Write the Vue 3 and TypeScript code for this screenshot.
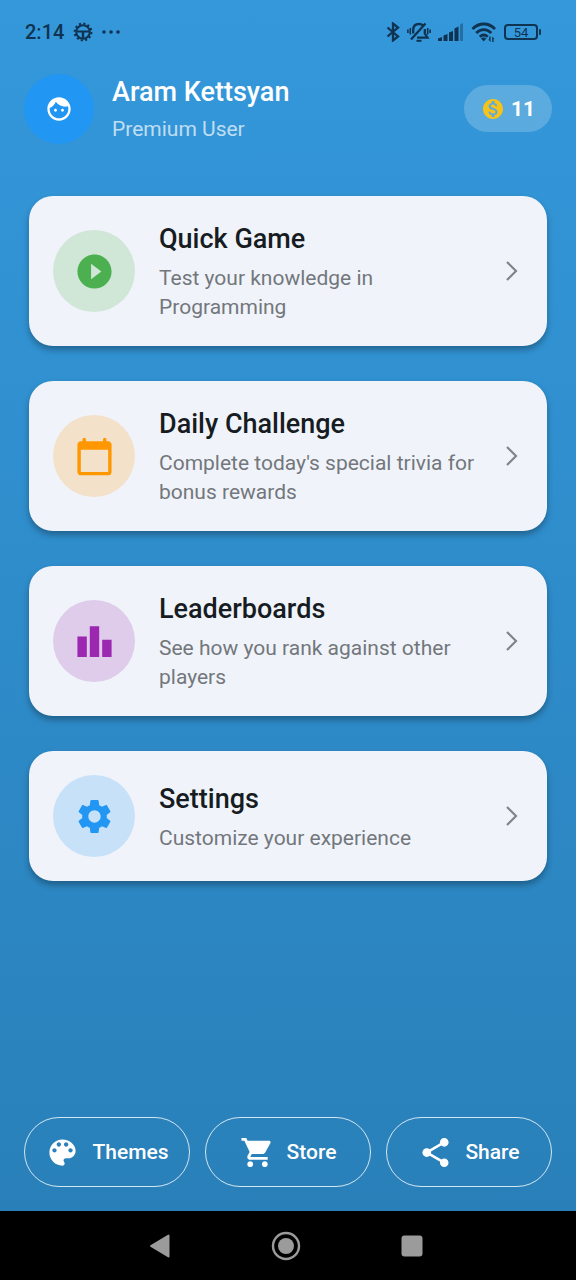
<script setup lang="ts">
interface MenuItem {
  title: string
  text: string
  tone: string
  path: string
}

interface Action {
  label: string
  path: string
}

const menu: MenuItem[] = [
  {
    title: 'Quick Game',
    text: 'Test your knowledge in Programming',
    tone: 'green',
    path: 'M12 2C6.48 2 2 6.48 2 12s4.48 10 10 10 10-4.48 10-10S17.52 2 12 2zm-2 14.5v-9l6 4.5-6 4.5z',
  },
  {
    title: 'Daily Challenge',
    text: "Complete today's special trivia for bonus rewards",
    tone: 'orange',
    path: 'M20 3h-1V2c0-.55-.45-1-1-1s-1 .45-1 1v1H7V2c0-.55-.45-1-1-1s-1 .45-1 1v1H4c-1.1 0-2 .9-2 2v16c0 1.1.9 2 2 2h16c1.1 0 2-.9 2-2V5c0-1.1-.9-2-2-2zm0 18H4V8h16v13z',
  },
  {
    title: 'Leaderboards',
    text: 'See how you rank against other players',
    tone: 'purple',
    path: 'M7.5 21H2V9h5.5v12zm7.25-18h-5.5v18h5.5V3zM22 11h-5.5v10H22V11z',
  },
  {
    title: 'Settings',
    text: 'Customize your experience',
    tone: 'blue',
    path: 'M19.14 12.94c.04-.3.06-.61.06-.94 0-.32-.02-.64-.07-.94l2.03-1.58c.18-.14.23-.41.12-.61l-1.92-3.32c-.12-.22-.37-.29-.59-.22l-2.39.96c-.5-.38-1.03-.7-1.62-.94L14.4 2.81c-.04-.24-.24-.41-.48-.41h-3.84c-.24 0-.43.17-.47.41L9.25 5.35C8.66 5.59 8.12 5.92 7.63 6.29L5.24 5.33c-.22-.08-.47 0-.59.22L2.74 8.87c-.12.21-.08.47.12.61l2.03 1.58c-.05.3-.09.63-.09.94s.02.64.07.94l-2.03 1.58c-.18.14-.23.41-.12.61l1.92 3.32c.12.22.37.29.59.22l2.39-.96c.5.38 1.03.7 1.62.94l.36 2.54c.05.24.24.41.48.41h3.84c.24 0 .44-.17.47-.41l.36-2.54c.59-.24 1.13-.56 1.62-.94l2.39.96c.22.08.47 0 .59-.22l1.92-3.32c.12-.22.07-.47-.12-.61l-2.01-1.58zM12 15.6c-1.98 0-3.6-1.62-3.6-3.6s1.62-3.6 3.6-3.6 3.6 1.62 3.6 3.6-1.62 3.6-3.6 3.6z',
  },
]

const actions: Action[] = [
  {
    label: 'Themes',
    path: 'M12 3c-4.97 0-9 4.03-9 9s4.03 9 9 9c.83 0 1.5-.67 1.5-1.5 0-.39-.15-.74-.39-1.01-.23-.26-.38-.61-.38-.99 0-.83.67-1.5 1.5-1.5H16c2.76 0 5-2.24 5-5 0-4.42-4.03-8-9-8zm-5.5 9c-.83 0-1.5-.67-1.5-1.5S5.67 9 6.5 9 8 9.67 8 10.5 7.33 12 6.5 12zm3-4C8.67 8 8 7.33 8 6.5S8.67 5 9.5 5s1.5.67 1.5 1.5S10.33 8 9.5 8zm5 0c-.83 0-1.5-.67-1.5-1.5S13.67 5 14.5 5s1.5.67 1.5 1.5S15.33 8 14.5 8zm3 4c-.83 0-1.5-.67-1.5-1.5S16.67 9 17.5 9s1.5.67 1.5 1.5-.67 1.5-1.5 1.5z',
  },
  {
    label: 'Store',
    path: 'M7 18c-1.1 0-1.99.9-1.99 2S5.9 22 7 22s2-.9 2-2-.9-2-2-2zM1 2v2h2l3.6 7.59-1.35 2.45c-.16.28-.25.61-.25.96 0 1.1.9 2 2 2h12v-2H7.42c-.14 0-.25-.11-.25-.25l.03-.12.9-1.63h7.45c.75 0 1.41-.41 1.75-1.03l3.58-6.49c.08-.14.12-.31.12-.48 0-.55-.45-1-1-1H5.21l-.94-2H1zm16 16c-1.1 0-1.99.9-1.99 2s.89 2 1.99 2 2-.9 2-2-.9-2-2-2z',
  },
  {
    label: 'Share',
    path: 'M18 16.08c-.76 0-1.44.3-1.96.77L8.91 12.7c.05-.23.09-.46.09-.7s-.04-.47-.09-.7l7.05-4.11c.54.5 1.25.81 2.04.81 1.66 0 3-1.34 3-3s-1.34-3-3-3-3 1.34-3 3c0 .24.04.47.09.7L8.04 9.81C7.5 9.31 6.79 9 6 9c-1.66 0-3 1.34-3 3s1.34 3 3 3c.79 0 1.5-.31 2.04-.81l7.12 4.16c-.05.21-.08.43-.08.65 0 1.61 1.31 2.92 2.92 2.92s2.92-1.31 2.92-2.92-1.31-2.92-2.92-2.92z',
  },
]
</script>

<template>
  <div class="screen">
    <div class="app">
      <div class="status">
        <div class="status-left">
          <span class="clock">2:14</span>
          <svg class="gear" viewBox="0 0 20 20" aria-hidden="true">
            <circle cx="10" cy="10" r="6.8" fill="none" stroke="currentColor" stroke-width="2" />
            <circle cx="10" cy="10" r="8.4" fill="none" stroke="currentColor" stroke-width="2" stroke-dasharray="2.2 2.198" />
            <path d="M4 8.4h12v2.2h-4.8V16H8.8v-5.400H4z" fill="currentColor" />
          </svg>
          <svg class="dots" viewBox="0 0 18 4" aria-hidden="true">
            <circle cx="2" cy="2" r="1.800" fill="currentColor" />
            <circle cx="9" cy="2" r="1.800" fill="currentColor" />
            <circle cx="16" cy="2" r="1.800" fill="currentColor" />
          </svg>
        </div>
        <div class="status-right">
          <svg class="bluetooth" viewBox="0 0 14 20" aria-hidden="true">
            <path d="M1.500 5.500l10.500 9L7 18.500V1.500l5 4-10.500 9" fill="none" stroke="currentColor" stroke-width="2.300" />
          </svg>
          <svg class="mute" viewBox="0 0 24 20" aria-hidden="true">
            <g fill="none" stroke="currentColor" stroke-width="2.300">
              <path d="M6.200 11.500V8C6.200 4 8.500 2 12 2c1.600 0 2.900.4 3.900 1.300M17.800 7v4.500l2.700 4.200H10M4 17.500L18.500 1.500" />
              <path d="M3.300 6v6.500M.9 7.500v3.500M20.700 6v6.500M23.100 7.500v3.500" stroke-width="1.600" />
              <path d="M9.500 18.800h5" stroke-width="2" />
            </g>
          </svg>
          <svg class="signal" viewBox="0 0 26 18" aria-hidden="true">
            <path d="M0 15.500l4-1.500v4H0zM5.500 12.500l4-1.500v7h-4zM11 9.500L15 8v10h-4zM16.500 5.500l4-2V18h-4z" fill="currentColor" />
            <path d="M22 1.500L25 0v18h-3z" fill="currentColor" opacity=".4" />
          </svg>
          <svg class="wifi" viewBox="0 0 26 20" aria-hidden="true">
            <g fill="none" stroke="currentColor" stroke-width="2.800">
              <path d="M1.500 7C8 .3 17.500.3 24 7M5.200 11c4.500-4.500 10.600-4.500 15.100 0M8.800 14.800c2.500-2.300 5.400-2.300 7.900 0" />
            </g>
            <path d="M10 16.500c1.600-1.300 3.700-1.300 5.300 0L12.700 19.500zM19.600 14.500v5.500l-2.400-2.600h1v-2.900zM21.200 20v-5.500l2.400 2.600h-1V20z" fill="currentColor" />
          </svg>
          <span class="battery"><span class="cell">54</span><span class="tip"></span></span>
        </div>
      </div>

      <header class="header">
        <div class="avatar">
          <svg viewBox="0 0 24 24" aria-hidden="true">
            <path fill="currentColor" d="M9 11.750c-.69 0-1.250.56-1.250 1.250s.56 1.250 1.250 1.250 1.250-.56 1.250-1.250-.56-1.250-1.250-1.250zm6 0c-.69 0-1.250.56-1.250 1.250s.56 1.250 1.250 1.250 1.250-.56 1.250-1.250-.56-1.250-1.250-1.250zM12 2C6.480 2 2 6.480 2 12s4.480 10 10 10 10-4.480 10-10S17.520 2 12 2zm0 18c-4.410 0-8-3.590-8-8 0-.29.02-.58.05-.86 2.360-1.050 4.230-2.980 5.210-5.370C11.070 8.330 14.050 10 17.420 10c.78 0 1.530-.09 2.250-.26.21.71.33 1.470.33 2.260 0 4.410-3.590 8-8 8z" />
          </svg>
        </div>
        <div class="user">
          <h1>Aram Kettsyan</h1>
          <p>Premium User</p>
        </div>
        <div class="coins">
          <svg viewBox="0 0 24 24" aria-hidden="true">
            <path fill="currentColor" d="M12 2C6.480 2 2 6.480 2 12s4.480 10 10 10 10-4.480 10-10S17.520 2 12 2zm1.410 16.090V20h-2.670v-1.930c-1.710-.36-3.160-1.460-3.270-3.400h1.960c.1 1.050.82 1.870 2.650 1.870 1.960 0 2.400-.98 2.400-1.590 0-.83-.44-1.610-2.670-2.140-2.480-.6-4.180-1.620-4.180-3.670 0-1.720 1.390-2.840 3.110-3.210V4h2.670v1.950c1.860.45 2.790 1.860 2.850 3.390H14.300c-.05-1.110-.64-1.870-2.220-1.870-1.500 0-2.400.68-2.400 1.640 0 .84.65 1.390 2.670 1.910s4.180 1.390 4.180 3.910c-.01 1.830-1.380 2.830-3.120 3.160z" />
          </svg>
          <span>11</span>
        </div>
      </header>

      <main class="menu">
        <button v-for="item in menu" :key="item.title" type="button" class="card">
          <span class="badge" :class="item.tone">
            <svg viewBox="0 0 24 24" aria-hidden="true"><path fill="currentColor" :d="item.path" /></svg>
          </span>
          <span class="copy">
            <span class="title">{{ item.title }}</span>
            <span class="text">{{ item.text }}</span>
          </span>
          <svg class="chevron" viewBox="0 0 24 24" aria-hidden="true">
            <path d="M8 3l9 9-9 9" fill="none" stroke="currentColor" stroke-width="2.200" />
          </svg>
        </button>
      </main>

      <footer class="actions">
        <button v-for="action in actions" :key="action.label" type="button" class="action">
          <svg viewBox="0 0 24 24" aria-hidden="true"><path fill="currentColor" :d="action.path" /></svg>
          <span>{{ action.label }}</span>
        </button>
      </footer>
    </div>

    <nav class="system" aria-label="System navigation">
      <button type="button" aria-label="Back">
        <svg viewBox="0 0 30 30" aria-hidden="true">
          <path d="M23.500 4.500v21L6 15z" fill="currentColor" stroke="currentColor" stroke-width="2" stroke-linejoin="round" />
        </svg>
      </button>
      <button type="button" aria-label="Home">
        <svg viewBox="0 0 30 30" aria-hidden="true">
          <circle cx="15" cy="15" r="13" fill="none" stroke="currentColor" stroke-width="2.400" />
          <circle cx="15" cy="15" r="8" fill="currentColor" />
        </svg>
      </button>
      <button type="button" aria-label="Recent apps">
        <svg viewBox="0 0 30 30" aria-hidden="true">
          <rect x="4.500" y="4.500" width="21" height="21" rx="3" fill="currentColor" />
        </svg>
      </button>
    </nav>
  </div>
</template>

<style>
body {
  margin: 0;
}
</style>

<style scoped>
.screen {
  display: flex;
  flex-direction: column;
  min-height: 100vh;
  font-family: Roboto, "Liberation Sans", sans-serif;
  background: #000;
}

.app {
  flex: 1;
  display: flex;
  flex-direction: column;
  background: linear-gradient(#3498db, #2980b9);
}

button {
  margin: 0;
  padding: 0;
  border: 0;
  background: none;
  font: inherit;
  cursor: pointer;
}

svg {
  display: block;
  flex: none;
}

.status {
  display: flex;
  justify-content: space-between;
  align-items: center;
  height: 64px;
  padding: 0 35px 0 25px;
  color: #0f3350;
}

.status-left,
.status-right {
  display: flex;
  align-items: center;
}

.status-left {
  gap: 9px;
}

.status-right {
  gap: 7px;
}

.clock {
  font-size: 20px;
  line-height: 24px;
  font-weight: 500;
}

.gear {
  width: 20px;
  height: 20px;
}

.dots {
  width: 18px;
  height: 4px;
}

.bluetooth {
  width: 14px;
  height: 20px;
}

.mute {
  width: 24px;
  height: 20px;
}

.signal {
  width: 26px;
  height: 18px;
}

.wifi {
  width: 26px;
  height: 20px;
}

.battery {
  display: flex;
  align-items: center;
  gap: 1px;
}

.cell {
  box-sizing: border-box;
  width: 34px;
  height: 16px;
  border: 2px solid currentColor;
  border-radius: 4px;
  font-size: 13px;
  line-height: 13px;
  text-align: center;
}

.tip {
  width: 2px;
  height: 6px;
  border-radius: 1px;
  background: currentColor;
}

.header {
  display: flex;
  align-items: center;
  gap: 18px;
  padding: 9px 24px 0;
}

.avatar {
  flex: none;
  display: grid;
  place-items: center;
  width: 70px;
  height: 70px;
  border-radius: 50%;
  background: #2196f3;
  color: #fff;
}

.avatar svg {
  width: 28px;
  height: 28px;
}

.user {
  flex: 1;
}

h1,
p {
  margin: 0;
}

h1 {
  font-size: 27px;
  line-height: 38px;
  font-weight: 500;
  color: #fff;
}

.user p {
  margin-top: 4px;
  font-size: 21px;
  line-height: 29px;
  color: rgba(255, 255, 255, 0.7);
}

.coins {
  display: flex;
  align-items: center;
  gap: 6px;
  height: 47px;
  padding: 0 17px;
  border-radius: 24px;
  background: rgba(255, 255, 255, 0.2);
  font-size: 21px;
  font-weight: 700;
  color: #fff;
}

.coins svg {
  width: 24px;
  height: 24px;
  color: #f6c21c;
}

.menu {
  flex: 1;
  display: flex;
  flex-direction: column;
  gap: 35px;
  padding: 52px 29px 24px;
}

.card {
  display: flex;
  align-items: center;
  gap: 24px;
  padding: 24px;
  border-radius: 24px;
  background: #f0f4fa;
  box-shadow: 0 4px 6px rgba(0, 0, 0, 0.3);
  text-align: left;
}

.badge {
  flex: none;
  display: grid;
  place-items: center;
  width: 82px;
  height: 82px;
  border-radius: 50%;
}

.badge svg {
  width: 41px;
  height: 41px;
}

.green {
  background: #d0e7d8;
  color: #4caf50;
}

.orange {
  background: #f3e1ca;
  color: #ff9800;
}

.purple {
  background: #dfcbea;
  color: #9c27b0;
}

.blue {
  background: #c7e1f9;
  color: #2196f3;
}

.copy {
  flex: 1;
  display: flex;
  flex-direction: column;
  gap: 6px;
  margin-right: -8px;
}

.title {
  font-size: 27px;
  line-height: 38px;
  font-weight: 500;
  color: #171c22;
}

.text {
  font-size: 21px;
  line-height: 29px;
  color: #73777c;
}

.chevron {
  width: 24px;
  height: 24px;
  color: #808388;
}

.actions {
  display: flex;
  gap: 15px;
  padding: 0 24px 24px;
}

.action {
  flex: 1;
  display: flex;
  align-items: center;
  justify-content: center;
  gap: 12px;
  height: 70px;
  border: 1px solid rgba(255, 255, 255, 0.8);
  border-radius: 35px;
  font-size: 21px;
  font-weight: 500;
  color: #fff;
}

.action svg {
  width: 35px;
  height: 35px;
}

.system {
  display: flex;
  justify-content: center;
  align-items: center;
  gap: 96px;
  height: 69px;
  padding-right: 4px;
  color: #9b9b9b;
}

.system button {
  color: inherit;
}

.system svg {
  width: 30px;
  height: 30px;
}
</style>
